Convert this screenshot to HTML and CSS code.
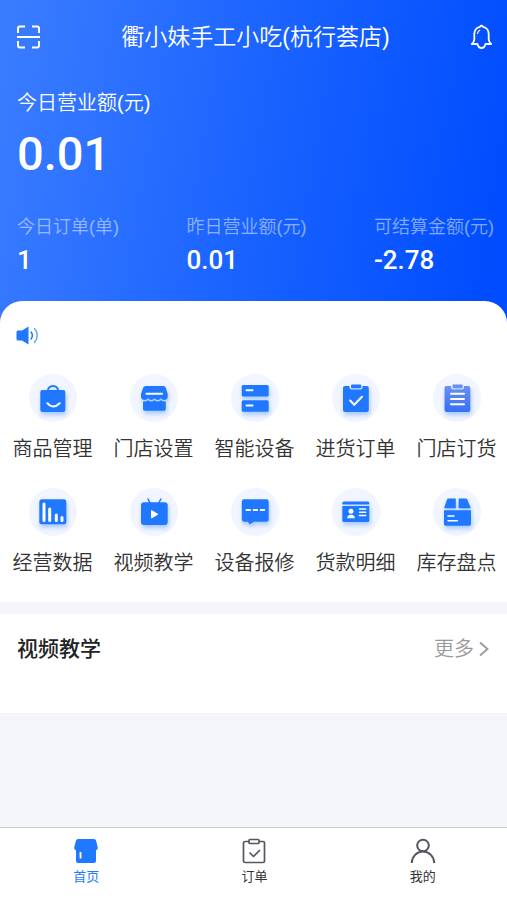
FILE: index.html
```html
<!DOCTYPE html>
<html lang="zh-CN">
<head>
    <meta charset="utf-8">
    <meta name="viewport" content="width=device-width, initial-scale=1">
    <title>衢小妹手工小吃(杭行荟店)</title>
    <link rel="stylesheet" href="styles.css">
</head>
<body>
<header class="hero">
    <div class="topbar">
        <button class="icon-btn" type="button" aria-label="扫一扫">
            <svg width="24" height="24" viewBox="0 0 24 24" fill="none" stroke="#fff" stroke-width="2">
                <path d="M8 1.500H3Q1 1.500 1 3.500V8M15 1.500h5Q22 1.500 22 3.500V8M8 22.500H3Q1 22.500 1 20.500V16M15 22.500h5Q22 22.500 22 20.500V16M0 12h23"/>
            </svg>
        </button>
        <h1 class="shop-name">衢小妹手工小吃(杭行荟店)</h1>
        <button class="icon-btn" type="button" aria-label="消息">
            <svg width="24" height="26" viewBox="0 0 24 26" fill="none" stroke="#fff" stroke-width="1.800" stroke-linejoin="round" stroke-linecap="round">
                <path d="M10 2.800Q11.500 .6 13 2.800C17 3.500 18.700 7 18.700 10v5.500q.2 2.500 2.500 4.500H15.500q-.8 4-4 4t-4-4H1.800q2.300-2 2.500-4.500V10c0-3 1.700-6.500 5.700-7.200z"/>
                <path d="M7.500 9.500q.4-2.300 2.200-3.200" stroke-width="1.200"/>
            </svg>
        </button>
    </div>
    <div class="today">
        <div class="today-label">今日营业额(元)</div>
        <div class="today-value">0.01</div>
    </div>
    <dl class="stats">
        <div>
            <dt>今日订单(单)</dt>
            <dd>1</dd>
        </div>
        <div>
            <dt>昨日营业额(元)</dt>
            <dd>0.01</dd>
        </div>
        <div>
            <dt>可结算金额(元)</dt>
            <dd>-2.78</dd>
        </div>
    </dl>
</header>

<main class="content">
    <section class="panel">
        <div class="notice">
            <svg width="24" height="24" viewBox="0 0 24 24" fill="none" stroke="#1f78ff" stroke-width="1.500" stroke-linecap="round">
                <path d="M2 6.500h4l6.500-4v18l-6.500-4H2q-1.500 0-1.500-1.500V8Q.5 6.500 2 6.500z" fill="#1f78ff" stroke="none"/>
                <path d="M15 8q2.800 3.500 0 7"/>
                <path d="M18.500 4.500q5.500 7 0 14" stroke="#6ba5ff"/>
            </svg>
        </div>
        <nav class="menu">
            <a class="menu-item" href="#">
                <svg class="menu-icon" viewBox="0 0 48 48">
                    <g class="shape">
                        <rect x="11.300" y="16" width="25" height="22" rx="2"/>
                        <path class="line-blue" d="M19 17.500v-1a5 4.500 0 0 1 10 0v1"/>
                    </g>
                    <path class="line" d="M18.300 29.200q5.700 6.500 12.400 0"/>
                </svg>
                <span>商品管理</span>
            </a>
            <a class="menu-item" href="#">
                <svg class="menu-icon" viewBox="0 0 48 48">
                    <g class="shape">
                        <path d="M15.500 12h18q1.500 0 2.200 1.500l2 6.500v3q-.5 3-3.500 3-2 0-3.300-1.800-1.500 1.800-3.200 1.800t-3.200-1.800q-1.500 1.800-3.200 1.800t-3.200-1.800Q16.500 26 14.500 26q-3 0-3.500-3v-3l2.200-6.500Q14 12 15.500 12z"/>
                        <path d="M13 27.500q3 .5 5.100-1.300 3.200 2.500 6.400 0 3.200 2.500 6.400 0 2 1.800 4.900 1.300V35q0 1.700-1.700 1.700H14.700Q13 36.700 13 35z"/>
                    </g>
                    <path class="line" d="M16.500 19.700h15.500"/>
                </svg>
                <span>门店设置</span>
            </a>
            <a class="menu-item" href="#">
                <svg class="menu-icon" viewBox="0 0 48 48">
                    <g class="shape">
                        <rect x="10.700" y="11" width="27" height="11.500" rx="1.500"/>
                        <rect x="10.700" y="26.300" width="27" height="11.500" rx="1.500"/>
                    </g>
                    <path class="line" d="M15.500 16.200h6M15.500 31.500h6"/>
                </svg>
                <span>智能设备</span>
            </a>
            <a class="menu-item" href="#">
                <svg class="menu-icon" viewBox="0 0 48 48">
                    <g class="shape">
                        <path d="M13 12h4.500v1.500q0 2 2 2h9q2 0 2-2V12h4.300q2 0 2 2v22q0 2-2 2H13q-2 0-2-2V14q0-2 2-2z"/>
                        <rect x="19" y="10.600" width="10.200" height="3.600" rx="1"/>
                    </g>
                    <path class="line" d="M18.200 26.500l4 4.200 7.800-8"/>
                </svg>
                <span>进货订单</span>
            </a>
            <a class="menu-item" href="#">
                <svg class="menu-icon" viewBox="0 0 48 48">
                    <defs>
                        <linearGradient id="order-fill" x1="0" y1="0" x2="0" y2="1">
                            <stop offset="0" stop-color="#6a90f3"/>
                            <stop offset="1" stop-color="#3670f5"/>
                        </linearGradient>
                    </defs>
                    <g class="shape">
                        <path fill="url(#order-fill)" d="M13.500 12H18v1.500q0 2 2 2h9q2 0 2-2V12h4.300q2 0 2 2v22q0 2-2 2H13.500q-2 0-2-2V14q0-2 2-2z"/>
                        <rect fill="#6a90f3" x="19.500" y="10.600" width="10.200" height="3.600" rx="1"/>
                    </g>
                    <path class="line" d="M18 19.700h13M18 25h13M18 30.300h13"/>
                </svg>
                <span>门店订货</span>
            </a>
            <a class="menu-item" href="#">
                <svg class="menu-icon" viewBox="0 0 48 48">
                    <g class="shape">
                        <rect x="10.300" y="11.300" width="27" height="25" rx="2.500"/>
                    </g>
                    <path class="line bars" d="M15 16v16.500M20.700 21v11.500M27.300 27v5.500M33 29.500v3"/>
                </svg>
                <span>经营数据</span>
            </a>
            <a class="menu-item" href="#">
                <svg class="menu-icon" viewBox="0 0 48 48">
                    <g class="shape">
                        <rect x="11" y="14.300" width="26.700" height="22.700" rx="3"/>
                        <path class="line-blue thin" d="M18 11l2 4M30.800 11l-2 4"/>
                    </g>
                    <path class="play" d="M21.500 22.500v7.500l6.300-3.750z"/>
                </svg>
                <span>视频教学</span>
            </a>
            <a class="menu-item" href="#">
                <svg class="menu-icon" viewBox="0 0 48 48">
                    <g class="shape">
                        <path d="M13 11.300h22.500q2.200 0 2.200 2.200v18q0 2.200-2.200 2.200H23L18.500 36.500 17 33.700H13q-2.200 0-2.200-2.200v-18q0-2.200 2.200-2.200z"/>
                    </g>
                    <path class="line" d="M15.500 22h3.500M22.600 22h3.500M29.700 22h3.500"/>
                </svg>
                <span>设备报修</span>
            </a>
            <a class="menu-item" href="#">
                <svg class="menu-icon" viewBox="0 0 48 48">
                    <g class="shape">
                        <path d="M10.300 16.400V15q0-1.500 1.500-1.500h24q1.500 0 1.500 1.500v1.400z"/>
                        <path d="M10.300 17.900h27v14.500q0 1.700-1.700 1.700H12q-1.700 0-1.700-1.700z"/>
                    </g>
                    <circle class="white" cx="19" cy="23.300" r="2.500"/>
                    <path class="white" d="M15.200 30.300q0-3.600 3.800-3.600t3.800 3.600z"/>
                    <path class="line thin" d="M27.500 21h6.200M27.500 24.300h6.200M27.500 27.600h6.200"/>
                </svg>
                <span>货款明细</span>
            </a>
            <a class="menu-item" href="#">
                <svg class="menu-icon" viewBox="0 0 48 48">
                    <g class="shape">
                        <path d="M15.500 10.500h7.300v9.800H11l3-8.800q.4-1 1.500-1z"/>
                        <path d="M25.600 10.500h7.200q1.100 0 1.500 1l3.500 8.800H25.600z"/>
                        <path d="M11 22.300h27V36q0 1.700-1.700 1.700H12.700Q11 37.700 11 36z"/>
                    </g>
                    <path class="line thin" d="M15 28h6M15 32.800h9.500"/>
                </svg>
                <span>库存盘点</span>
            </a>
        </nav>
    </section>

    <section class="video">
        <h2 class="video-title">视频教学</h2>
        <a class="more" href="#">更多
            <svg width="12" height="18" viewBox="0 0 12 18" fill="none" stroke="#999" stroke-width="1.800">
                <path d="M2 2.500L9.500 9 2 15.500"/>
            </svg>
        </a>
    </section>
</main>

<nav class="tabbar">
    <a class="tab active" href="#">
        <svg width="26" height="26" viewBox="0 0 26 26">
            <path fill="#1f78ff" d="M5 1h16q1.500 0 2 1.500l1.800 7q.2 2.500-1.800 2.700V23q0 2-2 2H5q-2 0-2-2V12.200Q1 12 1.200 9.500l1.800-7Q3.500 1 5 1z"/>
            <path stroke="#fff" stroke-width="1.800" d="M7.500 14v6.500"/>
        </svg>
        首页
    </a>
    <a class="tab" href="#">
        <svg width="26" height="26" viewBox="0 0 26 26" fill="none" stroke="#55565e" stroke-width="1.700" stroke-linejoin="round">
            <path d="M8 3.500H4Q2.500 3.500 2.500 5v18q0 1.500 1.500 1.500h18q1.500 0 1.500-1.500V5q0-1.500-1.500-1.500h-4"/>
            <rect x="8" y="1.500" width="10" height="4" rx="1"/>
            <path d="M8.500 14.500l4 4 6.500-6.500"/>
        </svg>
        订单
    </a>
    <a class="tab" href="#">
        <svg width="26" height="26" viewBox="0 0 26 26" fill="none" stroke="#55565e" stroke-width="2">
            <circle cx="13" cy="7.500" r="5.800"/>
            <path d="M1.800 25a11.200 11.500 0 0 1 22.400 0"/>
        </svg>
        我的
    </a>
</nav>
</body>
</html>
```

FILE: styles.css
```css
* {
    box-sizing: border-box;
}
body {
    margin: 0;
    min-height: 100vh;
    display: flex;
    flex-direction: column;
    background: #f5f6fa;
    color: #333;
    font-family: "Liberation Sans", "Noto Sans CJK SC", sans-serif;
    font-weight: 350;
}
a {
    color: inherit;
    text-decoration: none;
}
h1, h2, dl, dd {
    margin: 0;
}

/* header */
.hero {
    padding: 0 13px 47px 17px;
    background: linear-gradient(100deg, #3c7dff 0%, #1a63ff 50%, #004dff 95%);
    color: #fff;
}
.topbar {
    display: flex;
    align-items: center;
    justify-content: space-between;
    height: 74px;
}
.icon-btn {
    display: flex;
    padding: 0;
    border: 0;
    background: none;
}
.shop-name {
    font-size: 23px;
    font-weight: 350;
    line-height: 32px;
}
.today {
    padding-top: 14px;
}
.today-label {
    font-size: 20px;
    line-height: 30px;
}
.today-value {
    margin-top: 6px;
    font-family: Roboto, sans-serif;
    font-size: 47px;
    font-weight: 500;
    line-height: 60px;
}
.stats {
    display: flex;
    justify-content: space-between;
    margin-top: 30px;
}
.stats dt {
    font-size: 18px;
    line-height: 26px;
    color: rgba(255, 255, 255, .5);
}
.stats dd {
    margin-top: 4px;
    font-family: Roboto, sans-serif;
    font-size: 26px;
    font-weight: 500;
    line-height: 32px;
}

/* menu panel */
.content {
    flex: 1;
    margin-top: -22px;
}
.panel {
    padding: 23px 0 25px;
    border-radius: 22px 22px 0 0;
    background: #fff;
}
.notice {
    display: flex;
    padding: 0 16px;
}
.menu {
    display: grid;
    grid-template-columns: repeat(5, 1fr);
    row-gap: 25px;
    margin-top: 26px;
    padding-left: 2px;
}
.menu-item {
    display: flex;
    flex-direction: column;
    align-items: center;
    gap: 13px;
    font-size: 20px;
    line-height: 28px;
    white-space: nowrap;
}
.menu-icon {
    width: 48px;
    height: 48px;
    border-radius: 50%;
    background: #f1f5ff;
}
.shape {
    fill: #1f78ff;
    filter: drop-shadow(1px 3px 2px rgba(31, 120, 255, .35));
}
.line, .line-blue {
    fill: none;
    stroke: #fff;
    stroke-width: 2;
    stroke-linecap: round;
}
.line-blue {
    stroke: #1f78ff;
}
.bars {
    stroke-width: 3;
}
.thin {
    stroke-width: 1.5;
}
.play {
    fill: #fff;
    stroke: #fff;
    stroke-linejoin: round;
}
.white {
    fill: #fff;
}

/* video block */
.video {
    display: flex;
    justify-content: space-between;
    align-items: flex-start;
    margin-top: 12px;
    padding: 20px 17px 49px;
    background: #fff;
}
.video-title {
    font-size: 21px;
    font-weight: 500;
    line-height: 30px;
    color: #222;
}
.more {
    display: flex;
    align-items: center;
    gap: 4px;
    font-size: 20px;
    line-height: 30px;
    color: #999;
}

/* bottom tabs */
.tabbar {
    display: flex;
    height: 73px;
    padding-left: 2px;
    border-top: 1px solid #ccc;
    background: #fff;
}
.tab {
    flex: 1;
    display: flex;
    flex-direction: column;
    align-items: center;
    gap: 4px;
    padding-top: 10px;
    font-size: 13px;
    font-weight: 400;
    line-height: 18px;
}
.tab.active {
    color: #1f78ff;
}
```
